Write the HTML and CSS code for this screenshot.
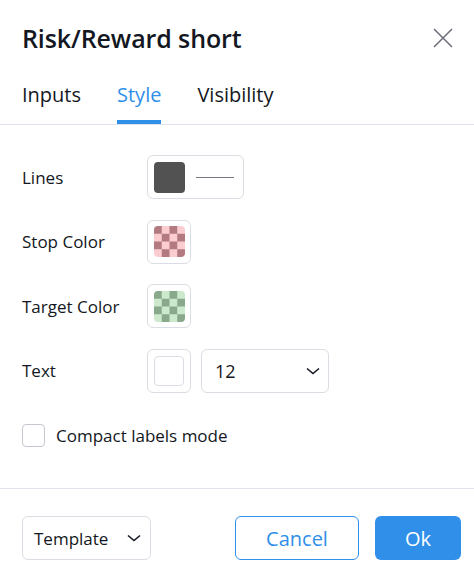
FILE: index.html
```html
<!DOCTYPE html>
<html lang="en">
<head>
<meta charset="utf-8">
<title>Risk/Reward short</title>
<link rel="stylesheet" href="styles.css">
</head>
<body>
<div class="dialog">
  <header class="header">
    <h1 class="title">Risk/Reward short</h1>
    <button class="close" aria-label="Close">
      <svg width="20" height="20" viewBox="0 0 20 20"><path d="M1 1L19 19M19 1L1 19" stroke="#6a6d78" stroke-width="1.5" fill="none"/></svg>
    </button>
  </header>
  <nav class="tabs">
    <div class="tab">Inputs</div>
    <div class="tab active">Style</div>
    <div class="tab">Visibility</div>
  </nav>
  <main class="content">
    <div class="row">
      <div class="label">Lines</div>
      <div class="control lines">
        <span class="swatch solid"></span>
        <span class="line-sample"></span>
      </div>
    </div>
    <div class="row">
      <div class="label">Stop Color</div>
      <div class="control square">
        <span class="swatch checker red"></span>
      </div>
    </div>
    <div class="row">
      <div class="label">Target Color</div>
      <div class="control square">
        <span class="swatch checker green"></span>
      </div>
    </div>
    <div class="row">
      <div class="label">Text</div>
      <div class="control square">
        <span class="swatch white"></span>
      </div>
      <div class="control select">
        <span class="select-value">12</span>
        <svg class="chev" width="14" height="8" viewBox="0 0 14 8"><path d="M1 1.5L7 6.5L13 1.5" stroke="#131722" stroke-width="1.6" fill="none"/></svg>
      </div>
    </div>
    <label class="check-row">
      <span class="checkbox"></span>
      <span class="check-label">Compact labels mode</span>
    </label>
  </main>
  <footer class="footer">
    <div class="btn template">
      <span>Template</span>
      <svg class="chev" width="14" height="8" viewBox="0 0 14 8"><path d="M1 1.5L7 6.5L13 1.5" stroke="#131722" stroke-width="1.6" fill="none"/></svg>
    </div>
    <div class="spacer"></div>
    <div class="btn cancel">Cancel</div>
    <div class="btn ok">Ok</div>
  </footer>
</div>
</body>
</html>
```
FILE: styles.css
```css
* { box-sizing: border-box; }
html, body { margin: 0; padding: 0; background: #fff; }
body {
  font-family: "Open Sans", "Noto Sans", sans-serif;
  color: #131722;
  width: 474px;
  height: 575px;
  overflow: hidden;
}
.dialog { display: flex; flex-direction: column; height: 575px; }

.header {
  height: 76px;
  display: flex;
  align-items: center;
  justify-content: space-between;
  padding: 0 21px 0 22px;
}
.title {
  margin: 0;
  font-size: 25px;
  font-weight: 600;
  line-height: 30px;
  letter-spacing: -0.1px;
}
.close {
  border: 0;
  background: none;
  padding: 0;
  width: 20px;
  height: 20px;
  display: flex;
}

.tabs {
  height: 49px;
  display: flex;
  gap: 36px;
  padding: 0 22px;
  border-bottom: 1px solid #e0e3eb;
}
.tab {
  font-size: 20px;
  line-height: 38px;
  height: 48px;
  padding-bottom: 6px;
  border-bottom: 4px solid transparent;
}
.tab.active {
  color: #2f8fe9;
  border-bottom-color: #2f8fe9;
}

.content {
  height: 363px;
  padding: 30px 22px 0;
  display: flex;
  flex-direction: column;
  gap: 20.5px;
}
.row {
  display: flex;
  align-items: center;
  height: 44px;
}
.label {
  width: 125px;
  font-size: 17px;
}
.control {
  height: 44px;
  border: 1px solid #dadde3;
  border-radius: 6px;
  display: flex;
  align-items: center;
}
.control.square {
  width: 44px;
  justify-content: center;
}
.control.lines {
  width: 97px;
  padding-left: 6px;
}
.control.select {
  width: 128px;
  margin-left: 10px;
  padding: 0 8px 0 13px;
  justify-content: space-between;
  font-size: 18px;
}
.swatch {
  width: 31px;
  height: 31px;
  border-radius: 4px;
  display: block;
}
.swatch.solid { background: #525252; }
.swatch.white { background: #fff; border: 1px solid #dadde3; width: 30px; height: 30px; }
.swatch.checker { background-size: 15.5px 15.5px; }
.swatch.red { background-image: repeating-conic-gradient(#fbcdd0 0 25%, #b47a82 0 50%); }
.swatch.green { background-image: repeating-conic-gradient(#cde9cd 0 25%, #88a98c 0 50%); }
.line-sample {
  display: block;
  width: 38px;
  height: 1px;
  background: #787b86;
  margin-left: 11px;
}
.chev { display: block; }

.check-row {
  display: flex;
  align-items: center;
  height: 44px;
}
.checkbox {
  width: 23px;
  height: 23px;
  border: 1px solid #c5c8cf;
  border-radius: 4px;
  margin-right: 11px;
}
.check-label { font-size: 17px; }

.footer {
  border-top: 1px solid #e0e3eb;
  display: flex;
  align-items: flex-start;
  padding: 27px 13px 0 22px;
  gap: 16px;
  flex: 1;
}
.spacer { flex: 1; }
.btn {
  height: 44px;
  border-radius: 6px;
  display: flex;
  align-items: center;
  justify-content: center;
  font-size: 20px;
}
.btn.template {
  width: 129px;
  border: 1px solid #dadde3;
  justify-content: space-between;
  padding: 0 9px 0 11px;
  font-size: 17px;
}
.btn.cancel {
  width: 124px;
  border: 1px solid #2f8fe9;
  color: #2f8fe9;
}
.btn.ok {
  width: 86px;
  background: #2f8fe9;
  color: #fff;
}
```
